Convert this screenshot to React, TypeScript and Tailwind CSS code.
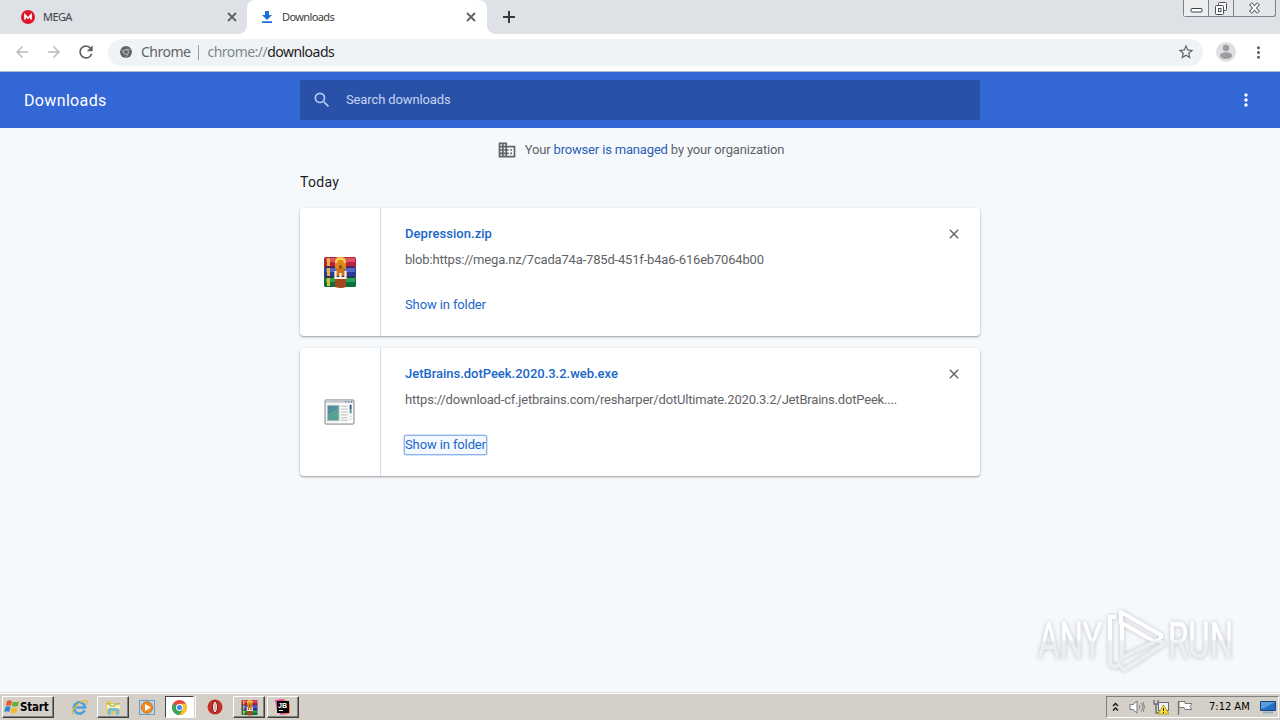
import type { ReactNode } from "react";
import { MdArrowBack, MdArrowForward, MdBusiness, MdClose, MdMoreVert, MdRefresh, MdSearch, MdStarBorder } from "react-icons/md";

const downloads = [
  {
    name: "Depression.zip",
    nameClass: "tracking-[0.05px]",
    url: "blob:https://mega.nz/7cada74a-785d-451f-b4a6-616eb7064b00",
    urlClass: "tracking-[-0.18px]",
    icon: <ArchiveIcon size={34} />,
    focused: false
  },
  {
    name: "JetBrains.dotPeek.2020.3.2.web.exe",
    nameClass: "tracking-[-0.02px]",
    url: "https://download-cf.jetbrains.com/resharper/dotUltimate.2020.3.2/JetBrains.dotPeek....",
    urlClass: "tracking-[-0.19px]",
    icon: <ProgramIcon />,
    focused: true
  }
];

function ArchiveIcon({ size }: { size: number }) {
  return (
    <svg width={size} height={size} viewBox="0 0 34 34">
      <rect x="1" y="2" width="32" height="10.5" rx="1.5" fill="#b32340" />
      <rect x="3" y="3" width="29" height="4" fill="#e05066" />
      <rect x="1" y="12" width="32" height="10.5" rx="1.5" fill="#2d3b96" />
      <rect x="3" y="13" width="29" height="4" fill="#5367cf" />
      <rect x="1" y="22" width="32" height="10" rx="1.5" fill="#08713c" />
      <rect x="3" y="23" width="29" height="4" fill="#2ba25a" />
      <path d="M1 12h32M1 22h32" stroke="#331c33" />
      <path d="M5.5 3v8M5.5 13v8M5.5 23v8" stroke="#e4b638" strokeWidth="3" />
      <path d="M12 4l2-2h7l2 2v10H12z" fill="#df861d" />
      <path d="M13 8c0-6 9-6 9 0" fill="none" stroke="#ffcf55" strokeWidth="2.5" />
      <path d="M12 22h11v10q-5 2-11 0z" fill="#a4471b" />
      <path d="M13 13h9v8h-9z" fill="#cd731c" />
      <path d="M12.500 16v7h10v-7M17.500 18v5" fill="none" stroke="#fff3df" strokeWidth="2.2" />
      <circle cx="17.5" cy="12" r="1.7" fill="#75501e" />
    </svg>
  );
}

function ProgramIcon() {
  return (
    <svg className="-ml-px" width="31" height="27" viewBox="0 0 32 28">
      <defs>
        <linearGradient id="preview" x2="1" y2="1">
          <stop stopColor="#4c83a8" />
          <stop offset="1" stopColor="#55ad83" />
        </linearGradient>
      </defs>
      <rect x="1" y="1" width="30" height="25" rx="1" fill="#fbfbfb" stroke="#777b80" />
      <path d="M2 3h28" stroke="#c5cbd2" strokeWidth="2" />
      <path d="M22 3h1M25 3h1M28 3h1" stroke="#415c86" strokeWidth="1.5" />
      <rect x="3.500" y="6.500" width="12" height="16" fill="url(#preview)" stroke="#b4bec3" />
      <path d="M4 17l11-6M4 20l11-5" stroke="#80b7a1" opacity=".6" />
      <path d="M17.500 7.500h7M17.500 10.500h7M17.500 13.500h7M17.500 16.500h7M17.500 19.500h7M17.500 22h7" stroke="#b9b9b9" />
      <path d="M27.500 6v5" stroke="#33527f" strokeWidth="2" />
      <path d="M27.500 11v4" stroke="#4f9e89" strokeWidth="2" />
      <path d="M26.500 18h2M26.500 21h2" stroke="#c4c4c4" />
    </svg>
  );
}

function ChromeMark({ gray = false }: { gray?: boolean }) {
  return (
    <svg width={gray ? 12 : 15} height={gray ? 12 : 15} viewBox="0 0 16 16">
      <circle cx="8" cy="8" r="8" fill={gray ? "#606468" : "#e5483b"} />
      {!gray && (
        <>
          <path d="M1.100 4A8 8 0 0 0 8 16l3.500-6L8 8z" fill="#36a853" />
          <path d="M15 4H8l3.500 6L8 16A8 8 0 0 0 15 4z" fill="#fbc42e" />
        </>
      )}
      {gray && <path d="M8 4.500h7.300M4.900 9.700L1.400 3.800M11.100 9.700L7.500 16" stroke="#b9bcc0" />}
      <circle cx="8" cy="8" r="3.700" fill={gray ? "#c8cbce" : "#fff"} />
      <circle cx="8" cy="8" r="2.700" fill={gray ? "#606468" : "#4285f4"} />
    </svg>
  );
}

function TabClose() {
  return (
    <svg className="ml-auto" width="12" height="12" viewBox="0 0 12 12">
      <path d="M2 2l8 8M10 2l-8 8" stroke="#5f6368" strokeWidth="1.800" />
    </svg>
  );
}

function WindowButtons() {
  return (
    <div className="ml-auto mr-[4px] flex h-[17px] w-[93px] rounded-b-[3px] border border-t-0 border-[#7d8189] bg-[#e4e6ea]">
      <div className="flex w-[25px] items-center justify-center border-r border-[#7d8189] bg-[#edeef0]">
        <svg width="13" height="16" viewBox="0 0 13 16">
          <rect x="1" y="8.500" width="11" height="3.500" rx="1" fill="#fff" stroke="#3c4049" />
        </svg>
      </div>
      <div className="flex w-[25px] items-center justify-center border-r border-[#7d8189]">
        <svg width="14" height="16" viewBox="0 0 14 16">
          <rect x="4.500" y="2.500" width="8" height="8" rx="1" fill="#f7f7f7" stroke="#4a4e57" />
          <rect x="1.500" y="5.500" width="8" height="9" rx="1" fill="#fff" stroke="#4a4e57" />
          <rect x="4.500" y="8.500" width="2.500" height="3" fill="#fff" stroke="#4a4e57" />
        </svg>
      </div>
      <div className="flex flex-1 items-center justify-center">
        <svg width="13" height="16" viewBox="0 0 13 16">
          <path d="M2.500 3.500l8 9M10.500 3.500l-8 9" stroke="#4c5059" strokeWidth="4" />
          <path d="M3 4l7 8M10 4l-7 8" stroke="#fafafa" strokeWidth="2.200" />
        </svg>
      </div>
    </div>
  );
}

function TabStrip() {
  return (
    <div className="flex h-[34px] bg-[#dee1e6] font-['Noto_Sans',sans-serif] text-[11px] text-[#3c4043]">
      <div className="flex w-[247px] items-center rounded-br-lg pl-[21px] pr-[9px]">
        <svg width="14" height="14" viewBox="0 0 14 14">
          <circle cx="7" cy="7" r="7" fill="#df1728" />
          <path d="M4 9.500V5l3 3 3-3v4.500" fill="none" stroke="#fff" strokeWidth="1.700" />
        </svg>
        <span className="ml-2 tracking-[-0.6px]">MEGA</span>
        <TabClose />
      </div>
      <div className="relative flex w-[240px] items-center rounded-t-lg bg-white pl-[14px] pr-[10px]">
        <span className="absolute -left-2 bottom-0 size-2 bg-[radial-gradient(circle_at_0_0,transparent_7.5px,white_8px)]" />
        <span className="absolute -right-2 bottom-0 size-2 bg-[radial-gradient(circle_at_100%_0,transparent_7.5px,white_8px)]" />
        <svg width="12" height="12" viewBox="0 0 12 12">
          <path d="M4 0h4v4h3L6 9 1 4h3zM1 10.300h10V12H1z" fill="#1b6fd8" />
        </svg>
        <span className="ml-[9px] tracking-[-0.62px]">Downloads</span>
        <TabClose />
      </div>
      <svg className="ml-[15px] mt-[10px]" width="14" height="14" viewBox="0 0 14 14">
        <path d="M7 1v12M1 7h12" stroke="#35383d" strokeWidth="2" />
      </svg>
      <WindowButtons />
    </div>
  );
}

function Toolbar() {
  return (
    <div className="flex h-[38px] items-center border-b border-[#aebbd5] bg-white pb-px text-[#5f6368]">
      <MdArrowBack className="ml-[13px] size-[18px] text-[#b9bbbe]" />
      <MdArrowForward className="ml-[14px] size-[18px] text-[#b9bbbe]" />
      <MdRefresh className="ml-[13px] size-5" />
      <div className="ml-[12px] flex h-[27px] w-[1095px] items-center rounded-full bg-[#f0f3f5] pl-[12px] pr-[8px] font-['Noto_Sans',sans-serif] text-[14px]">
        <ChromeMark gray />
        <span className="-mt-[2px] ml-[9px] tracking-[-0.5px]">Chrome</span>
        <span className="ml-[8px] h-[15px] w-px bg-[#9a9da1]" />
        <span className="-mt-[2px] ml-[8px] tracking-[-0.53px] text-[#80868b]">
          chrome://<span className="text-[#202124]">downloads</span>
        </span>
        <MdStarBorder className="ml-auto size-[18px]" />
      </div>
      <svg className="ml-[13px]" width="20" height="20" viewBox="0 0 20 20">
        <circle cx="10" cy="10" r="10" fill="#dedfe1" />
        <circle cx="10" cy="6" r="3.200" fill="#9b9da0" />
        <ellipse cx="10" cy="13.700" rx="6" ry="3.400" fill="#9b9da0" />
      </svg>
      <MdMoreVert className="ml-[13px] size-[19px]" />
    </div>
  );
}

function DownloadCard({ item }: { item: (typeof downloads)[number] }) {
  return (
    <div className="flex h-[128px] w-[680px] rounded bg-white shadow-[0_1px_2px_rgba(60,64,67,0.38),0_1px_3px_rgba(60,64,67,0.16)]">
      <div className="flex w-[81px] items-center justify-center border-r border-[#dadce0]">{item.icon}</div>
      <div className="flex flex-1 flex-col items-start pl-6 pt-[17px] text-[13px] leading-[18px]">
        <span className={`font-medium text-[#1967c8] ${item.nameClass}`}>{item.name}</span>
        <span className={`mt-[8px] whitespace-nowrap text-[#5f6368] ${item.urlClass}`}>{item.url}</span>
        <span
          className={`mt-[26px] -ml-px rounded-[2px] border px-0 tracking-[-0.12px] text-[#1b67cb] ${
            item.focused ? "border-[#8db2ed] bg-[#f4f9ff] shadow-[0_0_0_0.5px_#a5c3f2]" : "border-transparent"
          }`}
        >
          Show in folder
        </span>
      </div>
      <MdClose className="mr-[18px] mt-[18px] size-4 text-[#5f6368]" />
    </div>
  );
}

function Watermark() {
  return (
    <svg
      className="absolute bottom-[18px] right-[38px] drop-shadow-[0_0_2px_rgba(120,125,130,0.45)]"
      width="210"
      height="70"
      viewBox="0 0 210 70"
      fontFamily="Roboto, sans-serif"
      fontSize="50"
    >
      <defs>
        <linearGradient id="mark" x2="0" y2="70" gradientUnits="userSpaceOnUse">
          <stop offset=".5" stopColor="#fff" />
          <stop offset=".54" stopColor="#eceeef" />
        </linearGradient>
      </defs>
      <g fill="url(#mark)" stroke="url(#mark)" strokeWidth=".6">
        <text x="0" y="54" transform="translate(6 0) scale(.66 1)">ANY</text>
        <text x="0" y="54" transform="translate(136 0) scale(.66 1)">RUN</text>
      </g>
      <g fill="none" stroke="url(#mark)" strokeWidth="4" strokeLinejoin="round">
        <path d="M84 13h-6v47l5 3 6-3" />
        <path d="M123 38L90 19v36M129 35v-4L89 8v12M89 54l37-18 6 4-40 26-4-4" />
      </g>
    </svg>
  );
}

function DownloadsPage() {
  return (
    <div className="flex h-[620px] flex-col bg-[#f6f9fc] font-[Roboto,sans-serif]">
      <div className="flex h-14 shrink-0 items-center bg-[#3367d6] text-white">
        <span className="mt-[2px] w-[300px] pl-6 text-[16px] tracking-[0.35px]">Downloads</span>
        <div className="flex h-10 w-[680px] items-center bg-[#2951a8] pl-[12px] text-[13px] text-[#c4d4f3]">
          <MdSearch className="size-5 text-[#b4c9f3]" />
          <span className="ml-[14px] tracking-[-0.12px]">Search downloads</span>
        </div>
        <MdMoreVert className="ml-auto mr-6 size-5" />
      </div>
      <div className="relative flex flex-1 flex-col items-center">
        <div className="mt-[12px] flex h-5 items-center pl-px text-[13px] text-[#5f6368]">
          <MdBusiness className="mr-[8px] size-5" />
          <span className="tracking-[-0.17px]">
            Your <span className="text-[#2b60b6]">browser is managed</span> by your organization
          </span>
        </div>
        <div className="mt-[12px] h-5 w-[680px] text-[14px] leading-5 tracking-[0.3px] text-[#202124]">Today</div>
        <div className="mt-[16px] flex flex-col gap-3">
          {downloads.map((item) => (
            <DownloadCard key={item.name} item={item} />
          ))}
        </div>
        <Watermark />
      </div>
    </div>
  );
}

function TaskButton({ children, active = false }: { children: ReactNode; active?: boolean }) {
  return (
    <div
      className={`flex h-[22px] items-center justify-center border ${
        active
          ? "w-[29px] border-[#404040] border-b-white border-r-white bg-white"
          : "w-8 border-white border-b-[#404040] border-r-[#404040] bg-[#d4d0c8] shadow-[inset_-1px_-1px_#808080]"
      }`}
    >
      {children}
    </div>
  );
}

function Taskbar() {
  return (
    <div className="flex h-[28px] items-center border-t border-[#e1dfda] bg-[#d4d0c8] pl-[2px] pt-px shadow-[inset_0_1px_white] font-['DejaVu_Sans_Condensed','DejaVu_Sans',sans-serif]">
      <div className="flex h-[22px] w-[52px] items-center border border-white border-b-[#404040] border-r-[#404040] pl-px shadow-[inset_-1px_-1px_#808080]">
        <svg width="16" height="16" viewBox="0 0 16 16">
          <path d="M3 2c2-1 3-1 5 0L6.800 7c-2-1-3-1-5 0z" fill="#e25a26" />
          <path d="M9 2.400c2 1 4 1 6 0L13.800 7c-2 1-4 1-6 0z" fill="#6aad35" />
          <path d="M1.500 8c2-1 3-1 5 0l-1.300 5c-2-1-3-1-5 0z" fill="#2a86cf" />
          <path d="M7.500 8.400c2 1 4 1 6 0l-1.300 5c-2 1-4 1-6 0z" fill="#f5b72d" />
        </svg>
        <span className="mt-px text-[11.5px] font-bold tracking-[-0.2px] text-black">Start</span>
      </div>
      <svg className="ml-[17px]" width="17" height="17" viewBox="0 0 18 18">
        <path d="M14.500 12a6 6 0 1 1 .5-3H5" fill="none" stroke="#4aa3dc" strokeWidth="2.800" />
        <path d="M2 16C-2 12 13-1 16.500 2c1 .8.500 2-.5 4" fill="none" stroke="#e5b632" strokeWidth="1.400" />
      </svg>
      <div className="ml-[9px]">
        <TaskButton>
          <svg width="17" height="17" viewBox="0 0 17 17">
            <path d="M1 2h5l1 2h8v11H1z" fill="#e8c664" />
            <path d="M2 5h13v5H2z" fill="#fff2b0" />
            <path d="M2 5h3v2h5V5h5" fill="none" stroke="#86a95e" />
            <path d="M3 16v-5q0-2 2-2h7q2 0 2 2v5h-3v-4H6v4z" fill="#75bddb" />
          </svg>
        </TaskButton>
      </div>
      <svg className="ml-[10px]" width="16" height="17" viewBox="0 0 16 17">
        <rect x=".5" y="1.500" width="15" height="14" fill="#b9d8ec" stroke="#6e9cbb" />
        <circle cx="8" cy="8.500" r="5.700" fill="#ef8b20" stroke="#d9711a" />
        <path d="M6 5l6 3.500L6 12z" fill="#fff" />
      </svg>
      <div className="ml-[10px] flex">
        <TaskButton active>
          <ChromeMark />
        </TaskButton>
        <span className="ml-px h-[22px] w-px bg-white" />
      </div>
      <svg className="ml-[11px]" width="16" height="16" viewBox="0 0 16 16">
        <circle cx="8" cy="8" r="7.500" fill="#c42e27" />
        <ellipse cx="8" cy="8" rx="2.500" ry="5.800" fill="#f2e8e2" stroke="#811713" />
        <ellipse cx="8" cy="8" rx=".8" ry="4.500" fill="#d7a59f" />
      </svg>
      <div className="ml-[10px] flex gap-[2px]">
        <TaskButton>
          <ArchiveIcon size={17} />
        </TaskButton>
        <TaskButton>
          <svg width="16" height="16" viewBox="0 0 16 16">
            <path d="M0 1l8-1 7 5v9l-9 2-4-4z" fill="#e74891" />
            <path d="M9 0l6 5v9l-5 2z" fill="#f08046" />
            <rect x="2" y="2" width="12" height="12" fill="#090909" />
            <text x="3" y="8.500" fill="#fff" fontSize="7" fontWeight="bold" fontFamily="Liberation Sans, sans-serif">JB</text>
            <path d="M4 11.500h4" stroke="#fff" />
          </svg>
        </TaskButton>
      </div>
      <div className="ml-auto mr-px flex h-[22px] w-[173px] items-center border border-[#808080] border-b-white border-r-white pl-[5px] text-[11px] text-black">
        <svg width="7" height="10" viewBox="0 0 7 10">
          <path d="M1 4l2.500-2.500L6 4M1 8.500L3.500 6 6 8.500" fill="none" stroke="#111" strokeWidth="1.300" />
        </svg>
        <svg className="ml-[10px]" width="16" height="14" viewBox="0 0 16 14">
          <path d="M1 4.500h3L8 1v12L4 9.500H1z" fill="#fff" stroke="#74777a" />
          <path d="M10 5q2 2 0 4M12 3q4 4 0 8M14 2q3 5 0 10" fill="none" stroke="#7e8184" />
        </svg>
        <svg className="ml-[8px]" width="17" height="16" viewBox="0 0 17 16">
          <rect x="5.500" y="3.500" width="10" height="8" fill="#eef2f4" stroke="#686b6f" />
          <path d="M1 1v4h4V1M3 5v9h4" fill="none" stroke="#707275" strokeWidth="1.500" />
          <path d="M10.500 6L16 15H5z" fill="#ffdd2c" stroke="#a3892a" strokeWidth=".7" />
          <path d="M10.500 9v3M10.500 13v1" stroke="#202020" />
        </svg>
        <svg className="ml-[7px]" width="16" height="15" viewBox="0 0 16 15">
          <path d="M1.500 1v14" stroke="#717477" strokeWidth="1.400" />
          <path d="M2 1.500h6v2h7l-2 3 2 3H8l-1-2H2z" fill="#fff" stroke="#77797c" />
        </svg>
        <span className="ml-[16px] mt-px whitespace-nowrap">7:12 AM</span>
        <svg className="ml-auto mr-[2px]" width="16" height="14" viewBox="0 0 16 14">
          <path d="M.5 1.500h15v9H.5z" fill="#286fc4" stroke="#1b4685" />
          <path d="M1 2h14L4 8l-3 1z" fill="#5c9de0" />
          <path d="M3 12.500h10" stroke="#98aebd" strokeWidth="2" />
        </svg>
      </div>
    </div>
  );
}

export default function App() {
  return (
    <div className="flex h-[720px] w-[1280px] flex-col overflow-hidden bg-white">
      <TabStrip />
      <Toolbar />
      <DownloadsPage />
      <Taskbar />
    </div>
  );
}
